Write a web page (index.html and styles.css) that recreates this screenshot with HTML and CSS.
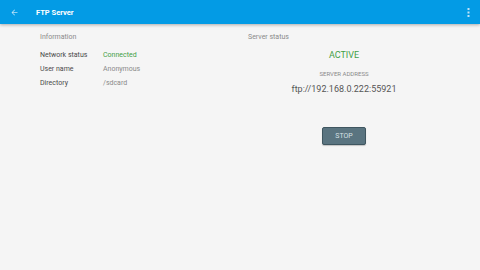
FILE: index.html
```html
<!DOCTYPE html>
<html lang="en">
<head>
  <meta charset="UTF-8">
  <title>FTP Server</title>
  <link rel="stylesheet" href="styles.css">
</head>
<body>
  <!-- Toolbar -->
  <div class="toolbar">
    <svg class="back" width="9" height="9" viewBox="0 0 24 24"><path d="M20 11H7.83l5.59-5.59L12 4l-8 8 8 8 1.41-1.41L7.83 13H20v-2z" fill="#bfe3f8"/></svg>
    <span class="title">FTP Server</span>
    <svg class="menu" width="3" height="9" viewBox="0 0 3 9"><rect x="0.5" y="0" width="2" height="2" fill="#bfe3f8"/><rect x="0.5" y="3.5" width="2" height="2" fill="#bfe3f8"/><rect x="0.5" y="7" width="2" height="2" fill="#bfe3f8"/></svg>
  </div>

  <!-- Content -->
  <div class="content">
    <div class="col info">
      <div class="heading">Information</div>
      <div class="rows">
        <div class="row"><span class="label">Network status</span><span class="value green">Connected</span></div>
        <div class="row"><span class="label">User name</span><span class="value">Anonymous</span></div>
        <div class="row"><span class="label">Directory</span><span class="value">/sdcard</span></div>
      </div>
    </div>
    <div class="col status">
      <div class="heading">Server status</div>
      <div class="center">
        <div class="state">ACTIVE</div>
        <div class="addr-label">SERVER ADDRESS</div>
        <div class="addr">ftp://192.168.0.222:55921</div>
        <button class="stop">STOP</button>
      </div>
    </div>
  </div>
</body>
</html>
```

FILE: styles.css
```css
* {
  margin: 0;
  padding: 0;
  box-sizing: border-box;
}
body {
  font-family: Roboto, 'Noto Sans', sans-serif;
  background: #f5f5f5;
  width: 480px;
  height: 270px;
  overflow: hidden;
}
/* Toolbar */
.toolbar {
  height: 24px;
  background: #039be5;
  display: flex;
  align-items: center;
  padding: 0 10px 0 10px;
  box-shadow: 0 1px 3px rgba(0, 0, 0, 0.3);
  position: relative;
}
.back {
  display: block;
}
.title {
  color: #fff;
  font-size: 7.5px;
  font-weight: bold;
  margin-left: 17px;
  flex: 1;
}
.menu {
  display: block;
}
/* Content */
.content {
  display: flex;
  padding: 8px 40px 0 40px;
}
.col {
  display: flex;
  flex-direction: column;
}
.info {
  width: 208px;
}
.status {
  width: 192px;
}
.heading {
  color: #8a8a8a;
  font-size: 7px;
  line-height: 10px;
}
.rows {
  margin-top: 9px;
  display: flex;
  flex-direction: column;
  gap: 4px;
}
.row {
  display: flex;
  font-size: 7px;
  line-height: 9.75px;
}
.label {
  width: 63px;
  color: #4a4a4a;
}
.value {
  color: #8a8a8a;
}
.value.green {
  color: #43a047;
}
.center {
  display: flex;
  flex-direction: column;
  align-items: center;
}
.state {
  color: #43a047;
  font-size: 9px;
  line-height: 12px;
  margin-top: 7px;
}
.addr-label {
  color: #8a8a8a;
  font-size: 6px;
  line-height: 9px;
  margin-top: 8px;
}
.addr {
  color: #555;
  font-size: 9px;
  line-height: 11px;
  margin-top: 6px;
}
.stop {
  margin-top: 32px;
  width: 44px;
  height: 18px;
  background: #5a7480;
  border: 1px solid #3f5660;
  border-radius: 2px;
  color: #d6e0e4;
  font-family: Roboto, sans-serif;
  font-size: 7px;
  box-shadow: 0 1px 1px rgba(0, 0, 0, 0.2);
}
```
